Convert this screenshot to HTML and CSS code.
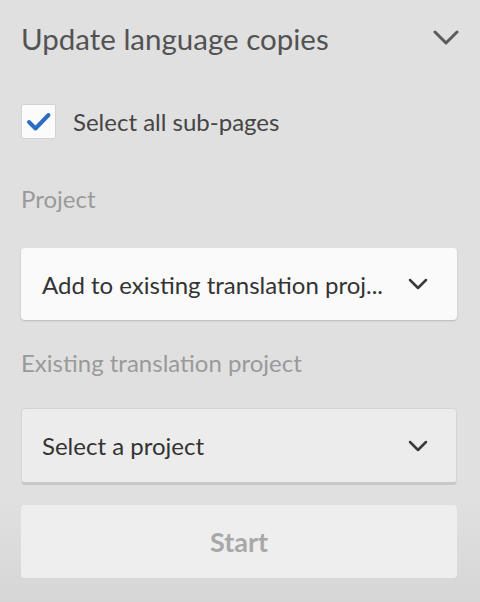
FILE: index.html
```html
<!DOCTYPE html>
<html>
<head>
<meta charset="utf-8">
<link rel="stylesheet" href="styles.css">
</head>
<body>
<div class="panel">
  <div class="header">
    <h1 class="title">Update language copies</h1>
    <svg class="hchev" viewBox="0 0 26 16" width="26" height="16"><path d="M2 2 L13 13 L24 2" fill="none" stroke="#5a5a5a" stroke-width="3" stroke-linecap="round" stroke-linejoin="round"/></svg>
  </div>
  <label class="check-row">
    <span class="checkbox"><svg viewBox="0 0 33 33" width="33" height="33"><path d="M7 17 L13.5 23.5 L26.5 10" fill="none" stroke="#2c6cc6" stroke-width="4" stroke-linecap="round" stroke-linejoin="round"/></svg></span>
    <span class="check-label">Select all sub-pages</span>
  </label>
  <div class="field-label first">Project</div>
  <div class="select primary">
    <span class="select-text">Add to existing translation proj...</span>
    <svg class="schev" viewBox="0 0 20 12" width="20" height="12"><path d="M2 2 L10 10 L18 2" fill="none" stroke="#3a3a3a" stroke-width="2.5" stroke-linecap="round" stroke-linejoin="round"/></svg>
  </div>
  <div class="field-label">Existing translation project</div>
  <div class="select secondary">
    <span class="select-text">Select a project</span>
    <svg class="schev" viewBox="0 0 20 12" width="20" height="12"><path d="M2 2 L10 10 L18 2" fill="none" stroke="#3a3a3a" stroke-width="2.5" stroke-linecap="round" stroke-linejoin="round"/></svg>
  </div>
  <button class="start">Start</button>
</div>
</body>
</html>
```
FILE: styles.css
```css
html, body {
  margin: 0;
  padding: 0;
}
body {
  background: #e0e0e0 linear-gradient(to bottom, #e0e0e0 0, #e0e0e0 500px, #d6d6d6 602px);
  font-family: "Lato", "Open Sans", sans-serif;
  width: 480px;
  height: 602px;
  overflow: hidden;
}
.panel {
  padding: 0 23px 0 21px;
  display: flex;
  flex-direction: column;
}
.header {
  display: flex;
  align-items: center;
  justify-content: space-between;
  height: 78px;
}
.title {
  margin: 0;
  font-weight: 400;
  font-size: 29.5px;
  line-height: 36px;
  color: #535353;
}
.hchev {
  margin-right: -2px;
  margin-top: -3px;
}
.check-row {
  display: flex;
  align-items: center;
  margin-top: 26px;
  gap: 17px;
}
.checkbox {
  width: 33px;
  height: 33px;
  background: #fbfbfb;
  border: 1px solid #d2d2d2;
  border-radius: 2px;
  display: flex;
  align-items: center;
  justify-content: center;
}
.checkbox svg { display: block; }
.check-label {
  font-size: 24px;
  line-height: 30px;
  color: #454545;
}
.field-label {
  font-size: 24px;
  line-height: 30px;
  color: #9a9a9a;
  margin-top: 28px;
  margin-bottom: 30px;
}
.field-label.first {
  margin-top: 45px;
  margin-bottom: 34px;
}
.select {
  height: 72px;
  border-radius: 4px;
  display: flex;
  align-items: center;
  justify-content: space-between;
  padding: 0 29px 0 21px;
  box-sizing: border-box;
}
.select.primary {
  background: #fafafa;
  box-shadow: 0 1px 2px rgba(0,0,0,0.18);
}
.select.secondary {
  background: #ececec;
  border: 1px solid #d4d4d4;
  border-bottom: 3px solid #c8c8c8;
  height: 77px;
  padding-left: 20px;
  padding-right: 28px;
}
.select-text {
  font-size: 24px;
  color: #333;
}
.start {
  margin-top: 20px;
  height: 73px;
  border: none;
  border-radius: 4px;
  background: #eeeeee;
  color: #a8a8a8;
  font-family: inherit;
  font-weight: 700;
  font-size: 27px;
}
```
